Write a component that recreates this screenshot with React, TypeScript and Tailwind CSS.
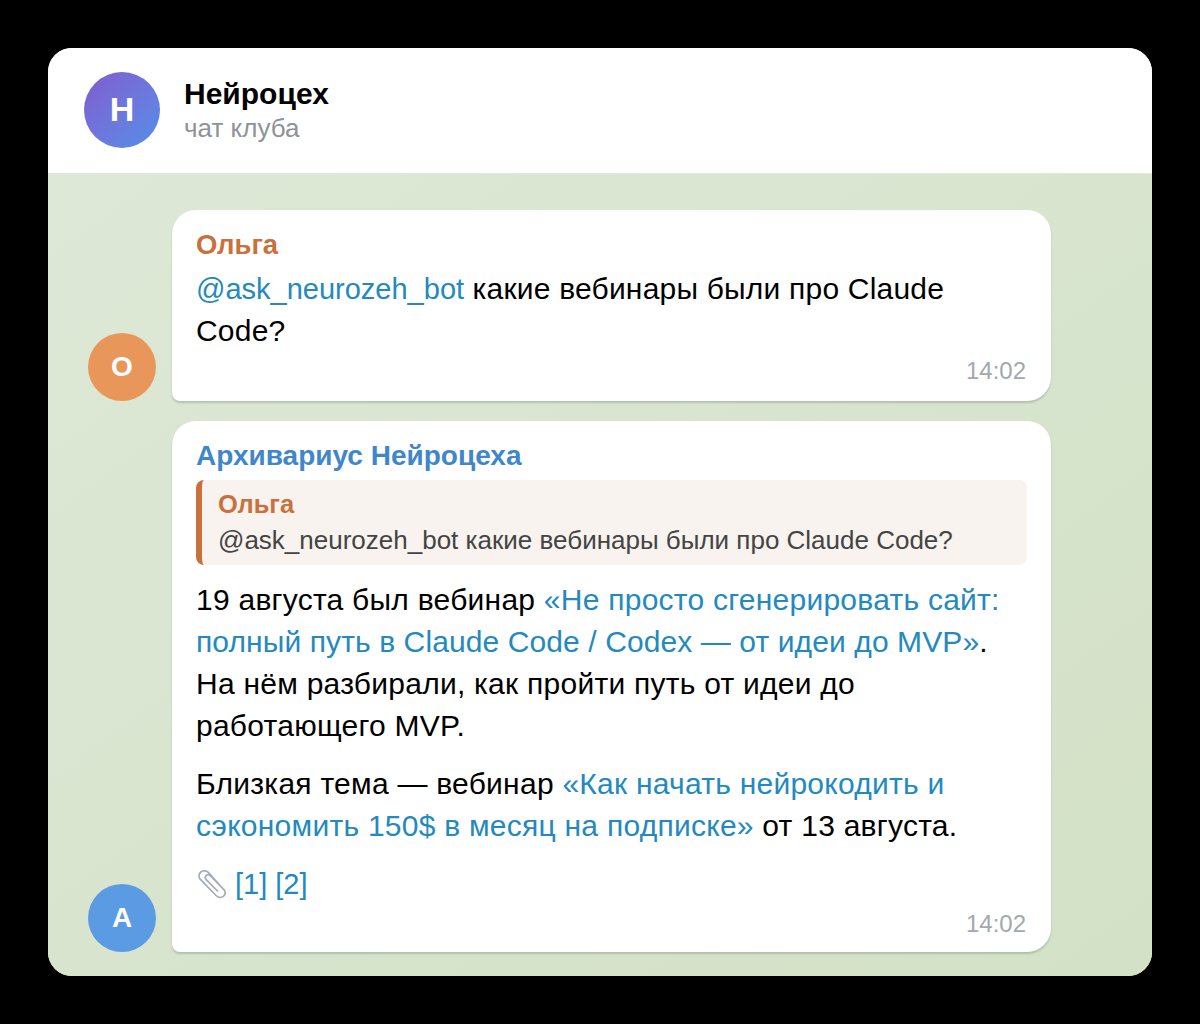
export default function App() {
  const font = { fontFamily: '"Liberation Sans", Arial, sans-serif' };
  return (
    <div className="min-h-[1024px] w-[1200px] bg-black p-12" style={font}>
      <div className="flex h-[928px] flex-col overflow-hidden rounded-[24px] bg-white">
        <header className="flex h-[126px] shrink-0 items-center gap-6 border-b border-[#e4ebde] bg-white px-9 pb-[2px]">
          <div className="flex h-[76px] w-[76px] items-center justify-center rounded-full bg-gradient-to-br from-[#7f5bd0] to-[#4f8fe8] text-[34px] font-bold text-white">
            Н
          </div>
          <div className="flex flex-col pt-[2px]">
            <div className="text-[30px] leading-[34px] font-bold text-black">Нейроцех</div>
            <div className="text-[26px] leading-[34px] text-[#8e9398]">чат клуба</div>
          </div>
        </header>

        <main className="flex flex-1 flex-col gap-5 bg-gradient-to-br from-[#dde8d6] to-[#d3e1c6] pt-9 pr-[101px] pl-10">
          <div className="flex items-end gap-4">
            <div className="flex h-[68px] w-[68px] shrink-0 items-center justify-center rounded-full bg-[#e8965a] text-[28px] font-bold text-white">
              О
            </div>
            <div className="h-[191px] w-[879px] rounded-[24px] rounded-bl-[8px] bg-white pt-[19px] pr-[25px] pl-6 shadow-[0_2px_2px_rgba(0,0,0,0.16)]">
              <div className="text-[27.5px] leading-[32px] font-bold text-[#c9713c]">Ольга</div>
              <p className="mt-[7px] text-[30px] leading-[42px] tracking-[0.2px] text-black">
                <span className="text-[29px] tracking-normal text-[#2389bf]">@ask_neurozeh_bot</span> какие вебинары были про Claude
                <br />
                Code?
              </p>
              <div className="mt-[6px] text-right text-[24px] leading-[26px] text-[#a2a8ad]">14:02</div>
            </div>
          </div>

          <div className="flex items-end gap-4">
            <div className="flex h-[68px] w-[68px] shrink-0 items-center justify-center rounded-full bg-[#5a9be3] text-[28px] font-bold text-white">
              А
            </div>
            <div className="h-[531px] w-[879px] rounded-[24px] rounded-bl-[8px] bg-white pt-[19px] pr-[25px] pl-6 shadow-[0_2px_2px_rgba(0,0,0,0.16)]">
              <div className="text-[28px] leading-[32px] font-bold text-[#3f87c9]">Архивариус Нейроцеха</div>
              <div className="mt-[8px] mr-[-1px] h-[85px] rounded-[8px] border-l-[6px] border-[#c9713c] bg-[#f8f3ee] pt-[8px] pl-4">
                <div className="text-[25.5px] leading-[32px] font-bold text-[#c9713c]">Ольга</div>
                <div className="mt-[4px] text-[26px] leading-[32px] text-[#444444]">
                  @ask_neurozeh_bot какие вебинары были про Claude Code?
                </div>
              </div>
              <p className="mt-[14px] text-[30px] leading-[42px] tracking-[0.25px] text-black">
                19 августа был вебинар{" "}
                <span className="text-[#2389bf]">
                  «Не просто сгенерировать сайт:
                  <br />
                  <span className="tracking-[0.1px]">полный путь в Claude Code / Codex — от идеи до MVP»</span>
                </span>
                .
                <br />
                На нём разбирали, как пройти путь от идеи до
                <br />
                работающего MVP.
              </p>
              <p className="mt-4 text-[30px] leading-[42px] tracking-[0.25px] text-black">
                Близкая тема — вебинар{" "}
                <span className="text-[#2389bf]">
                  «Как начать нейрокодить и
                  <br />
                  сэкономить 150$ в месяц на подписке»
                </span>{" "}
                от 13 августа.
              </p>
              <p className="mt-4 flex items-center gap-[7px] text-[29px] leading-[42px] text-[#2389bf]">
                <svg width="32" height="32" viewBox="0 0 32 32" fill="none" className="shrink-0">
                  <path
                    d="M28.5 22.5 L12.5 4.5 C10.5 2.4 7 2.2 4.8 4 C2.5 6 2.4 9.2 4.4 11.4 L20 27.5 C22 29.6 25.2 30 27.4 28.4 C29.6 26.6 29.8 23.6 28 21.6 L14.5 7.8 C13.2 6.5 11.4 6.4 10.2 7.5 C9 8.7 9.1 10.5 10.4 11.9 L21.5 23"
                    stroke="#a3adb5"
                    strokeWidth="1.7"
                    strokeLinecap="round"
                    strokeLinejoin="round"
                  />
                </svg>
                <span>[1] [2]</span>
              </p>
              <div className="mt-[6px] text-right text-[24px] leading-[26px] text-[#a2a8ad]">14:02</div>
            </div>
          </div>
        </main>
      </div>
    </div>
  );
}
